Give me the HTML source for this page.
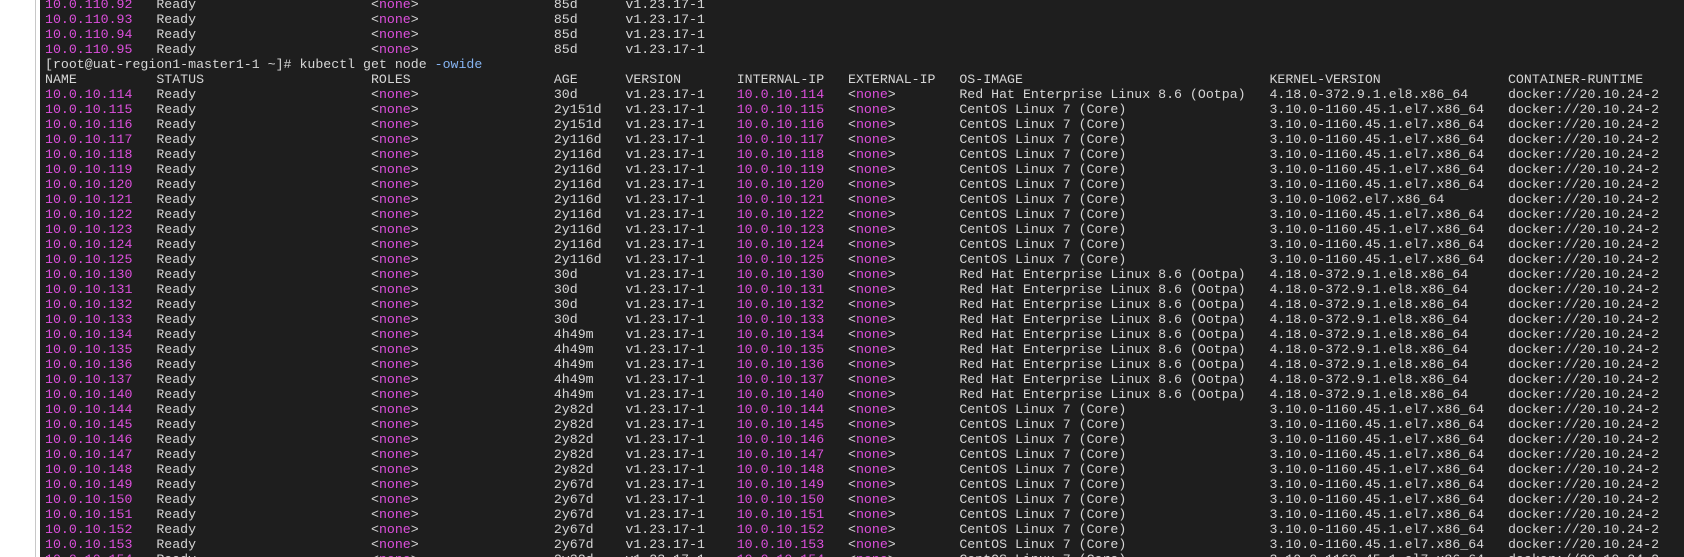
<!DOCTYPE html>
<html><head><meta charset="utf-8"><style>
html,body{margin:0;padding:0;width:1684px;height:557px;overflow:hidden;background:#fff}
#t{position:absolute;left:40px;top:0;width:1644px;height:557px;background:#1e1e1e;overflow:hidden}
#ln{position:absolute;left:35px;top:0;width:1px;height:557px;background:#c8c8c8}
#p{position:absolute;left:5px;top:-3.5px;font-family:"Liberation Mono","DejaVu Sans Mono",monospace;font-size:13.25px;color:#d6d6d6;white-space:normal}
#p div{height:15px;line-height:15px;white-space:pre}
#p span{display:inline-block}
.a{width:14ch}.b{width:27ch}.c{width:23ch}.d{width:9ch}.e{width:14ch}.f{width:14ch}.g{width:14ch}.h{width:39ch}.i{width:30ch}
#p i{font-style:normal;color:#dd4fdd}
#p b{font-weight:normal;color:#86b4f2}
</style></head><body>
<div id="ln"></div>
<div id="t"><div id="p"><div><span class="a"><i>10.0.110.92</i></span><span class="b">Ready</span><span class="c">&lt;<i>none</i>&gt;</span><span class="d">85d</span><span>v1.23.17-1</span></div><div><span class="a"><i>10.0.110.93</i></span><span class="b">Ready</span><span class="c">&lt;<i>none</i>&gt;</span><span class="d">85d</span><span>v1.23.17-1</span></div><div><span class="a"><i>10.0.110.94</i></span><span class="b">Ready</span><span class="c">&lt;<i>none</i>&gt;</span><span class="d">85d</span><span>v1.23.17-1</span></div><div><span class="a"><i>10.0.110.95</i></span><span class="b">Ready</span><span class="c">&lt;<i>none</i>&gt;</span><span class="d">85d</span><span>v1.23.17-1</span></div><div>[root@uat-region1-master1-1 ~]# kubectl get node <b>-owide</b></div><div><span class="a">NAME</span><span class="b">STATUS</span><span class="c">ROLES</span><span class="d">AGE</span><span class="e">VERSION</span><span class="f">INTERNAL-IP</span><span class="g">EXTERNAL-IP</span><span class="h">OS-IMAGE</span><span class="i">KERNEL-VERSION</span><span>CONTAINER-RUNTIME</span></div>
<div><span class="a"><i>10.0.10.114</i></span><span class="b">Ready</span><span class="c">&lt;<i>none</i>&gt;</span><span class="d">30d</span><span class="e">v1.23.17-1</span><span class="f"><i>10.0.10.114</i></span><span class="g">&lt;<i>none</i>&gt;</span><span class="h">Red Hat Enterprise Linux 8.6 (Ootpa)</span><span class="i">4.18.0-372.9.1.el8.x86_64</span><span>docker://20.10.24-2</span></div>
<div><span class="a"><i>10.0.10.115</i></span><span class="b">Ready</span><span class="c">&lt;<i>none</i>&gt;</span><span class="d">2y151d</span><span class="e">v1.23.17-1</span><span class="f"><i>10.0.10.115</i></span><span class="g">&lt;<i>none</i>&gt;</span><span class="h">CentOS Linux 7 (Core)</span><span class="i">3.10.0-1160.45.1.el7.x86_64</span><span>docker://20.10.24-2</span></div>
<div><span class="a"><i>10.0.10.116</i></span><span class="b">Ready</span><span class="c">&lt;<i>none</i>&gt;</span><span class="d">2y151d</span><span class="e">v1.23.17-1</span><span class="f"><i>10.0.10.116</i></span><span class="g">&lt;<i>none</i>&gt;</span><span class="h">CentOS Linux 7 (Core)</span><span class="i">3.10.0-1160.45.1.el7.x86_64</span><span>docker://20.10.24-2</span></div>
<div><span class="a"><i>10.0.10.117</i></span><span class="b">Ready</span><span class="c">&lt;<i>none</i>&gt;</span><span class="d">2y116d</span><span class="e">v1.23.17-1</span><span class="f"><i>10.0.10.117</i></span><span class="g">&lt;<i>none</i>&gt;</span><span class="h">CentOS Linux 7 (Core)</span><span class="i">3.10.0-1160.45.1.el7.x86_64</span><span>docker://20.10.24-2</span></div>
<div><span class="a"><i>10.0.10.118</i></span><span class="b">Ready</span><span class="c">&lt;<i>none</i>&gt;</span><span class="d">2y116d</span><span class="e">v1.23.17-1</span><span class="f"><i>10.0.10.118</i></span><span class="g">&lt;<i>none</i>&gt;</span><span class="h">CentOS Linux 7 (Core)</span><span class="i">3.10.0-1160.45.1.el7.x86_64</span><span>docker://20.10.24-2</span></div>
<div><span class="a"><i>10.0.10.119</i></span><span class="b">Ready</span><span class="c">&lt;<i>none</i>&gt;</span><span class="d">2y116d</span><span class="e">v1.23.17-1</span><span class="f"><i>10.0.10.119</i></span><span class="g">&lt;<i>none</i>&gt;</span><span class="h">CentOS Linux 7 (Core)</span><span class="i">3.10.0-1160.45.1.el7.x86_64</span><span>docker://20.10.24-2</span></div>
<div><span class="a"><i>10.0.10.120</i></span><span class="b">Ready</span><span class="c">&lt;<i>none</i>&gt;</span><span class="d">2y116d</span><span class="e">v1.23.17-1</span><span class="f"><i>10.0.10.120</i></span><span class="g">&lt;<i>none</i>&gt;</span><span class="h">CentOS Linux 7 (Core)</span><span class="i">3.10.0-1160.45.1.el7.x86_64</span><span>docker://20.10.24-2</span></div>
<div><span class="a"><i>10.0.10.121</i></span><span class="b">Ready</span><span class="c">&lt;<i>none</i>&gt;</span><span class="d">2y116d</span><span class="e">v1.23.17-1</span><span class="f"><i>10.0.10.121</i></span><span class="g">&lt;<i>none</i>&gt;</span><span class="h">CentOS Linux 7 (Core)</span><span class="i">3.10.0-1062.el7.x86_64</span><span>docker://20.10.24-2</span></div>
<div><span class="a"><i>10.0.10.122</i></span><span class="b">Ready</span><span class="c">&lt;<i>none</i>&gt;</span><span class="d">2y116d</span><span class="e">v1.23.17-1</span><span class="f"><i>10.0.10.122</i></span><span class="g">&lt;<i>none</i>&gt;</span><span class="h">CentOS Linux 7 (Core)</span><span class="i">3.10.0-1160.45.1.el7.x86_64</span><span>docker://20.10.24-2</span></div>
<div><span class="a"><i>10.0.10.123</i></span><span class="b">Ready</span><span class="c">&lt;<i>none</i>&gt;</span><span class="d">2y116d</span><span class="e">v1.23.17-1</span><span class="f"><i>10.0.10.123</i></span><span class="g">&lt;<i>none</i>&gt;</span><span class="h">CentOS Linux 7 (Core)</span><span class="i">3.10.0-1160.45.1.el7.x86_64</span><span>docker://20.10.24-2</span></div>
<div><span class="a"><i>10.0.10.124</i></span><span class="b">Ready</span><span class="c">&lt;<i>none</i>&gt;</span><span class="d">2y116d</span><span class="e">v1.23.17-1</span><span class="f"><i>10.0.10.124</i></span><span class="g">&lt;<i>none</i>&gt;</span><span class="h">CentOS Linux 7 (Core)</span><span class="i">3.10.0-1160.45.1.el7.x86_64</span><span>docker://20.10.24-2</span></div>
<div><span class="a"><i>10.0.10.125</i></span><span class="b">Ready</span><span class="c">&lt;<i>none</i>&gt;</span><span class="d">2y116d</span><span class="e">v1.23.17-1</span><span class="f"><i>10.0.10.125</i></span><span class="g">&lt;<i>none</i>&gt;</span><span class="h">CentOS Linux 7 (Core)</span><span class="i">3.10.0-1160.45.1.el7.x86_64</span><span>docker://20.10.24-2</span></div>
<div><span class="a"><i>10.0.10.130</i></span><span class="b">Ready</span><span class="c">&lt;<i>none</i>&gt;</span><span class="d">30d</span><span class="e">v1.23.17-1</span><span class="f"><i>10.0.10.130</i></span><span class="g">&lt;<i>none</i>&gt;</span><span class="h">Red Hat Enterprise Linux 8.6 (Ootpa)</span><span class="i">4.18.0-372.9.1.el8.x86_64</span><span>docker://20.10.24-2</span></div>
<div><span class="a"><i>10.0.10.131</i></span><span class="b">Ready</span><span class="c">&lt;<i>none</i>&gt;</span><span class="d">30d</span><span class="e">v1.23.17-1</span><span class="f"><i>10.0.10.131</i></span><span class="g">&lt;<i>none</i>&gt;</span><span class="h">Red Hat Enterprise Linux 8.6 (Ootpa)</span><span class="i">4.18.0-372.9.1.el8.x86_64</span><span>docker://20.10.24-2</span></div>
<div><span class="a"><i>10.0.10.132</i></span><span class="b">Ready</span><span class="c">&lt;<i>none</i>&gt;</span><span class="d">30d</span><span class="e">v1.23.17-1</span><span class="f"><i>10.0.10.132</i></span><span class="g">&lt;<i>none</i>&gt;</span><span class="h">Red Hat Enterprise Linux 8.6 (Ootpa)</span><span class="i">4.18.0-372.9.1.el8.x86_64</span><span>docker://20.10.24-2</span></div>
<div><span class="a"><i>10.0.10.133</i></span><span class="b">Ready</span><span class="c">&lt;<i>none</i>&gt;</span><span class="d">30d</span><span class="e">v1.23.17-1</span><span class="f"><i>10.0.10.133</i></span><span class="g">&lt;<i>none</i>&gt;</span><span class="h">Red Hat Enterprise Linux 8.6 (Ootpa)</span><span class="i">4.18.0-372.9.1.el8.x86_64</span><span>docker://20.10.24-2</span></div>
<div><span class="a"><i>10.0.10.134</i></span><span class="b">Ready</span><span class="c">&lt;<i>none</i>&gt;</span><span class="d">4h49m</span><span class="e">v1.23.17-1</span><span class="f"><i>10.0.10.134</i></span><span class="g">&lt;<i>none</i>&gt;</span><span class="h">Red Hat Enterprise Linux 8.6 (Ootpa)</span><span class="i">4.18.0-372.9.1.el8.x86_64</span><span>docker://20.10.24-2</span></div>
<div><span class="a"><i>10.0.10.135</i></span><span class="b">Ready</span><span class="c">&lt;<i>none</i>&gt;</span><span class="d">4h49m</span><span class="e">v1.23.17-1</span><span class="f"><i>10.0.10.135</i></span><span class="g">&lt;<i>none</i>&gt;</span><span class="h">Red Hat Enterprise Linux 8.6 (Ootpa)</span><span class="i">4.18.0-372.9.1.el8.x86_64</span><span>docker://20.10.24-2</span></div>
<div><span class="a"><i>10.0.10.136</i></span><span class="b">Ready</span><span class="c">&lt;<i>none</i>&gt;</span><span class="d">4h49m</span><span class="e">v1.23.17-1</span><span class="f"><i>10.0.10.136</i></span><span class="g">&lt;<i>none</i>&gt;</span><span class="h">Red Hat Enterprise Linux 8.6 (Ootpa)</span><span class="i">4.18.0-372.9.1.el8.x86_64</span><span>docker://20.10.24-2</span></div>
<div><span class="a"><i>10.0.10.137</i></span><span class="b">Ready</span><span class="c">&lt;<i>none</i>&gt;</span><span class="d">4h49m</span><span class="e">v1.23.17-1</span><span class="f"><i>10.0.10.137</i></span><span class="g">&lt;<i>none</i>&gt;</span><span class="h">Red Hat Enterprise Linux 8.6 (Ootpa)</span><span class="i">4.18.0-372.9.1.el8.x86_64</span><span>docker://20.10.24-2</span></div>
<div><span class="a"><i>10.0.10.140</i></span><span class="b">Ready</span><span class="c">&lt;<i>none</i>&gt;</span><span class="d">4h49m</span><span class="e">v1.23.17-1</span><span class="f"><i>10.0.10.140</i></span><span class="g">&lt;<i>none</i>&gt;</span><span class="h">Red Hat Enterprise Linux 8.6 (Ootpa)</span><span class="i">4.18.0-372.9.1.el8.x86_64</span><span>docker://20.10.24-2</span></div>
<div><span class="a"><i>10.0.10.144</i></span><span class="b">Ready</span><span class="c">&lt;<i>none</i>&gt;</span><span class="d">2y82d</span><span class="e">v1.23.17-1</span><span class="f"><i>10.0.10.144</i></span><span class="g">&lt;<i>none</i>&gt;</span><span class="h">CentOS Linux 7 (Core)</span><span class="i">3.10.0-1160.45.1.el7.x86_64</span><span>docker://20.10.24-2</span></div>
<div><span class="a"><i>10.0.10.145</i></span><span class="b">Ready</span><span class="c">&lt;<i>none</i>&gt;</span><span class="d">2y82d</span><span class="e">v1.23.17-1</span><span class="f"><i>10.0.10.145</i></span><span class="g">&lt;<i>none</i>&gt;</span><span class="h">CentOS Linux 7 (Core)</span><span class="i">3.10.0-1160.45.1.el7.x86_64</span><span>docker://20.10.24-2</span></div>
<div><span class="a"><i>10.0.10.146</i></span><span class="b">Ready</span><span class="c">&lt;<i>none</i>&gt;</span><span class="d">2y82d</span><span class="e">v1.23.17-1</span><span class="f"><i>10.0.10.146</i></span><span class="g">&lt;<i>none</i>&gt;</span><span class="h">CentOS Linux 7 (Core)</span><span class="i">3.10.0-1160.45.1.el7.x86_64</span><span>docker://20.10.24-2</span></div>
<div><span class="a"><i>10.0.10.147</i></span><span class="b">Ready</span><span class="c">&lt;<i>none</i>&gt;</span><span class="d">2y82d</span><span class="e">v1.23.17-1</span><span class="f"><i>10.0.10.147</i></span><span class="g">&lt;<i>none</i>&gt;</span><span class="h">CentOS Linux 7 (Core)</span><span class="i">3.10.0-1160.45.1.el7.x86_64</span><span>docker://20.10.24-2</span></div>
<div><span class="a"><i>10.0.10.148</i></span><span class="b">Ready</span><span class="c">&lt;<i>none</i>&gt;</span><span class="d">2y82d</span><span class="e">v1.23.17-1</span><span class="f"><i>10.0.10.148</i></span><span class="g">&lt;<i>none</i>&gt;</span><span class="h">CentOS Linux 7 (Core)</span><span class="i">3.10.0-1160.45.1.el7.x86_64</span><span>docker://20.10.24-2</span></div>
<div><span class="a"><i>10.0.10.149</i></span><span class="b">Ready</span><span class="c">&lt;<i>none</i>&gt;</span><span class="d">2y67d</span><span class="e">v1.23.17-1</span><span class="f"><i>10.0.10.149</i></span><span class="g">&lt;<i>none</i>&gt;</span><span class="h">CentOS Linux 7 (Core)</span><span class="i">3.10.0-1160.45.1.el7.x86_64</span><span>docker://20.10.24-2</span></div>
<div><span class="a"><i>10.0.10.150</i></span><span class="b">Ready</span><span class="c">&lt;<i>none</i>&gt;</span><span class="d">2y67d</span><span class="e">v1.23.17-1</span><span class="f"><i>10.0.10.150</i></span><span class="g">&lt;<i>none</i>&gt;</span><span class="h">CentOS Linux 7 (Core)</span><span class="i">3.10.0-1160.45.1.el7.x86_64</span><span>docker://20.10.24-2</span></div>
<div><span class="a"><i>10.0.10.151</i></span><span class="b">Ready</span><span class="c">&lt;<i>none</i>&gt;</span><span class="d">2y67d</span><span class="e">v1.23.17-1</span><span class="f"><i>10.0.10.151</i></span><span class="g">&lt;<i>none</i>&gt;</span><span class="h">CentOS Linux 7 (Core)</span><span class="i">3.10.0-1160.45.1.el7.x86_64</span><span>docker://20.10.24-2</span></div>
<div><span class="a"><i>10.0.10.152</i></span><span class="b">Ready</span><span class="c">&lt;<i>none</i>&gt;</span><span class="d">2y67d</span><span class="e">v1.23.17-1</span><span class="f"><i>10.0.10.152</i></span><span class="g">&lt;<i>none</i>&gt;</span><span class="h">CentOS Linux 7 (Core)</span><span class="i">3.10.0-1160.45.1.el7.x86_64</span><span>docker://20.10.24-2</span></div>
<div><span class="a"><i>10.0.10.153</i></span><span class="b">Ready</span><span class="c">&lt;<i>none</i>&gt;</span><span class="d">2y67d</span><span class="e">v1.23.17-1</span><span class="f"><i>10.0.10.153</i></span><span class="g">&lt;<i>none</i>&gt;</span><span class="h">CentOS Linux 7 (Core)</span><span class="i">3.10.0-1160.45.1.el7.x86_64</span><span>docker://20.10.24-2</span></div>
<div><span class="a"><i>10.0.10.154</i></span><span class="b">Ready</span><span class="c">&lt;<i>none</i>&gt;</span><span class="d">2y32d</span><span class="e">v1.23.17-1</span><span class="f"><i>10.0.10.154</i></span><span class="g">&lt;<i>none</i>&gt;</span><span class="h">CentOS Linux 7 (Core)</span><span class="i">3.10.0-1160.45.1.el7.x86_64</span><span>docker://20.10.24-2</span></div>
</div></div>
</body></html>
